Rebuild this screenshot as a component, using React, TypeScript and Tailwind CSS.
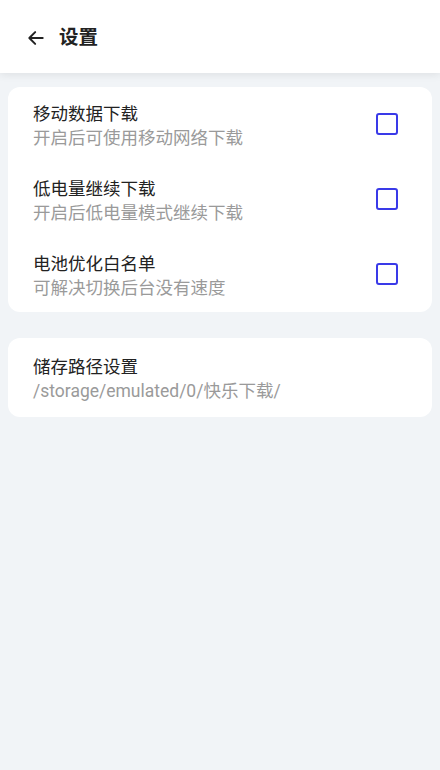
const rows = [
  { title: '移动数据下载', desc: '开启后可使用移动网络下载' },
  { title: '低电量继续下载', desc: '开启后低电量模式继续下载' },
  { title: '电池优化白名单', desc: '可解决切换后台没有速度' },
]

export default function App() {
  return (
    <div className="min-h-[770px] bg-[#f1f4f7] font-['Roboto','Noto_Sans_CJK_SC',sans-serif]">
      <header className="h-[73px] bg-white flex items-center px-[26px] pt-[3px] gap-[13px] shadow-[0_2px_8px_rgba(0,0,0,0.08)] relative">
        <svg width="20" height="20" viewBox="0 0 24 24" fill="none" stroke="#222" strokeWidth="2.4" strokeLinecap="round" strokeLinejoin="round">
          <path d="M20 12H5" />
          <path d="M11 5l-7 7 7 7" />
        </svg>
        <h1 className="text-[19.5px] font-bold text-[#222]">设置</h1>
      </header>

      <div className="px-2 pt-[14px] flex flex-col gap-[26px]">
        <div className="bg-white rounded-xl">
          {rows.map((r) => (
            <div key={r.title} className="h-[75px] pl-[25px] pr-[34px] pt-[15px] flex items-start">
              <div className="flex-1 min-w-0">
                <p className="text-[17.5px] leading-6 text-[#222]">{r.title}</p>
                <p className="text-[17.5px] leading-6 text-[#9a9a9a]">{r.desc}</p>
              </div>
              <div className="mt-[11px] w-[22px] h-[22px] border-[2.5px] border-[#3a3ae8] rounded-[3px]" />
            </div>
          ))}
        </div>

        <div className="bg-white rounded-xl h-[79px] pl-[25px] pt-[17px]">
          <p className="text-[17.5px] leading-6 text-[#222]">储存路径设置</p>
          <p className="text-[17.5px] leading-6 text-[#9a9a9a]">/storage/emulated/0/快乐下载/</p>
        </div>
      </div>
    </div>
  )
}
